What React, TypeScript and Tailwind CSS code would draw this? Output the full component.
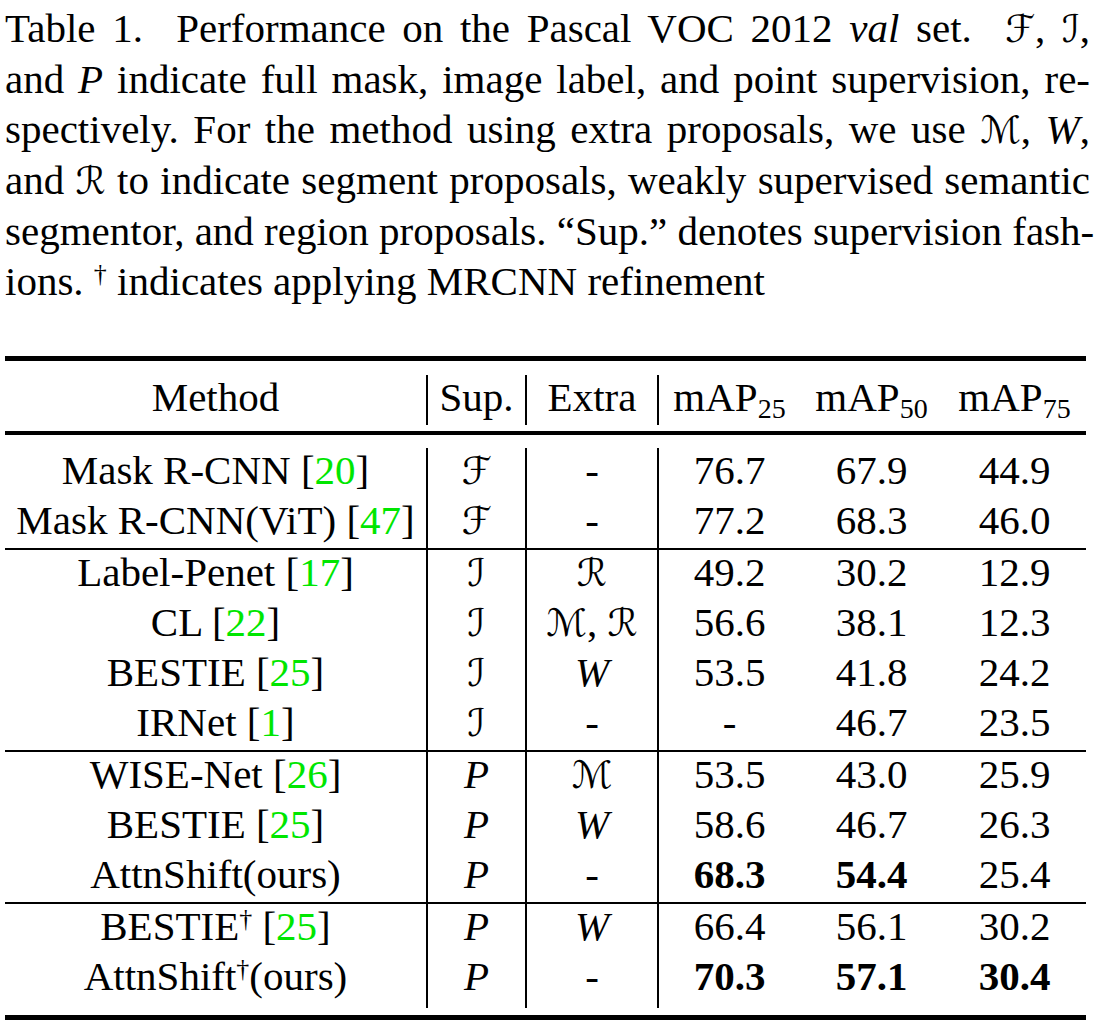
import React from "react";

const F = "ℱ";
const I = "ℐ";
const P = "P";
const M = "ℳ";
const W = "W";
const R = "ℛ";

function Cal({ c }: { c: string }) {
  if (c === "P" || c === "W") {
    return <span className="font-['Liberation_Serif',serif] italic text-[41px]">{c}</span>;
  }
  return <span className="font-['DejaVu_Serif','DejaVu_Sans',serif] text-[38px]">{c}</span>;
}

function Ref({ n }: { n: string }) {
  return (
    <>
      [<span className="text-[#00e600]">{n}</span>]
    </>
  );
}

function Dag() {
  return <sup className="text-[26px]">†</sup>;
}

type Row = {
  method: React.ReactNode;
  sup: string;
  extra: React.ReactNode;
  a: string;
  b: string;
  c: string;
  bold?: [boolean, boolean, boolean];
};

const GRID = "grid grid-cols-[421px_99px_132px_143px_143px_143px] h-[50px] leading-[44px] text-center whitespace-nowrap";

function TableRow({ r }: { r: Row }) {
  const bold = r.bold ?? [false, false, false];
  return (
    <div className={GRID}>
      <div>{r.method}</div>
      <div className="border-l-2 border-black">
        <Cal c={r.sup} />
      </div>
      <div className="border-l-2 border-black">{r.extra}</div>
      <div className="border-l-2 border-black">
        <span className={bold[0] ? "font-bold" : ""}>{r.a}</span>
      </div>
      <div>
        <span className={bold[1] ? "font-bold" : ""}>{r.b}</span>
      </div>
      <div>
        <span className={bold[2] ? "font-bold" : ""}>{r.c}</span>
      </div>
    </div>
  );
}

const sec1: Row[] = [
  { method: <>Mask R-CNN <Ref n="20" /></>, sup: F, extra: "-", a: "76.7", b: "67.9", c: "44.9" },
  { method: <>Mask R-CNN(ViT) <Ref n="47" /></>, sup: F, extra: "-", a: "77.2", b: "68.3", c: "46.0" },
];

const sec2: Row[] = [
  { method: <>Label-Penet <Ref n="17" /></>, sup: I, extra: <Cal c={R} />, a: "49.2", b: "30.2", c: "12.9" },
  { method: <>CL <Ref n="22" /></>, sup: I, extra: <><Cal c={M} />, <Cal c={R} /></>, a: "56.6", b: "38.1", c: "12.3" },
  { method: <>BESTIE <Ref n="25" /></>, sup: I, extra: <Cal c={W} />, a: "53.5", b: "41.8", c: "24.2" },
  { method: <>IRNet <Ref n="1" /></>, sup: I, extra: "-", a: "-", b: "46.7", c: "23.5" },
];

const sec3: Row[] = [
  { method: <>WISE-Net <Ref n="26" /></>, sup: P, extra: <Cal c={M} />, a: "53.5", b: "43.0", c: "25.9" },
  { method: <>BESTIE <Ref n="25" /></>, sup: P, extra: <Cal c={W} />, a: "58.6", b: "46.7", c: "26.3" },
  { method: <>AttnShift(ours)</>, sup: P, extra: "-", a: "68.3", b: "54.4", c: "25.4", bold: [true, true, false] },
];

const sec4: Row[] = [
  { method: <>BESTIE<Dag /> <Ref n="25" /></>, sup: P, extra: <Cal c={W} />, a: "66.4", b: "56.1", c: "30.2" },
  { method: <>AttnShift<Dag />(ours)</>, sup: P, extra: "-", a: "70.3", b: "57.1", c: "30.4", bold: [true, true, true] },
];

function Line({ children, last }: { children: React.ReactNode; last?: boolean }) {
  return (
    <div className={last ? "whitespace-nowrap" : "text-justify [text-align-last:justify] whitespace-nowrap"}>
      {children}
    </div>
  );
}

export default function App() {
  return (
    <div className="w-[1096px] h-[1027px] bg-white text-black font-['Liberation_Serif',serif] text-[41px] leading-[50px] overflow-hidden">
      <div className="pl-[5px] pt-[3px] w-[1090px]">
        <Line>
          Table 1. &nbsp;Performance on the Pascal VOC 2012 <span className="italic">val</span> set. &nbsp;<Cal c={F} />, <Cal c={I} />,
        </Line>
        <Line>
          and <Cal c={P} /> indicate full mask, image label, and point supervision, re-
        </Line>
        <Line>
          spectively. For the method using extra proposals, we use <Cal c={M} />, <Cal c={W} />,
        </Line>
        <Line>
          and <Cal c={R} /> to indicate segment proposals, weakly supervised semantic
        </Line>
        <Line>
          segmentor, and region proposals. “Sup.” denotes supervision fash-
        </Line>
        <Line last>
          ions. <Dag /> indicates applying MRCNN refinement
        </Line>
      </div>

      <div className="ml-[5px] mt-[50px] w-[1081px]">
        <div className="h-[5px] bg-black" />
        <div className="pt-[14px] pb-[6px]">
          <div className={GRID}>
            <div>Method</div>
            <div className="border-l-2 border-black">Sup.</div>
            <div className="border-l-2 border-black">Extra</div>
            <div className="border-l-2 border-black">
              mAP<sub className="text-[28px]">25</sub>
            </div>
            <div>
              mAP<sub className="text-[28px]">50</sub>
            </div>
            <div>
              mAP<sub className="text-[28px]">75</sub>
            </div>
          </div>
        </div>
        <div className="h-[4px] bg-black" />
        <div className="pt-[13px]">
          {sec1.map((r, i) => (
            <TableRow key={i} r={r} />
          ))}
        </div>
        <div className="h-[2px] bg-black" />
        <div>
          {sec2.map((r, i) => (
            <TableRow key={i} r={r} />
          ))}
        </div>
        <div className="h-[2px] bg-black" />
        <div>
          {sec3.map((r, i) => (
            <TableRow key={i} r={r} />
          ))}
        </div>
        <div className="h-[2px] bg-black" />
        <div>
          {sec4.map((r, i) => (
            <TableRow key={i} r={r} />
          ))}
          <div className="grid grid-cols-[421px_99px_132px_143px_143px_143px] h-[4px]">
            <div />
            <div className="border-l-2 border-black" />
            <div className="border-l-2 border-black" />
            <div className="border-l-2 border-black" />
            <div />
            <div />
          </div>
        </div>
        <div className="h-[7px]" />
        <div className="h-[5px] bg-black" />
      </div>
    </div>
  );
}
